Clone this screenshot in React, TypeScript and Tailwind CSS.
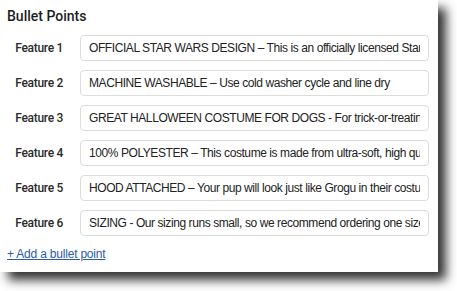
import React from 'react';

const features = [
  'OFFICIAL STAR WARS DESIGN – This is an officially licensed Star Wars costume for dogs',
  'MACHINE WASHABLE – Use cold washer cycle and line dry',
  'GREAT HALLOWEEN COSTUME FOR DOGS - For trick-or-treating and parties',
  '100% POLYESTER – This costume is made from ultra-soft, high quality fabric',
  'HOOD ATTACHED – Your pup will look just like Grogu in their costume',
  'SIZING - Our sizing runs small, so we recommend ordering one size up',
];

const App: React.FC = () => {
  return (
    <div
      className="w-[457px] h-[291px] bg-white overflow-hidden"
      style={{ fontFamily: '"Liberation Sans", Arial, sans-serif' }}
    >
      <div className="w-[438px] h-[272px] bg-white shadow-[8px_8px_10px_rgba(0,0,0,0.8)] pl-[7px] pr-[9px] pt-[6px]">
        <h2 className="font-['Roboto',sans-serif] text-[14px] leading-[20px] font-medium text-[#1d1d1f]">
          Bullet Points
        </h2>

        <div className="mt-[9px] flex flex-col gap-[9px]">
          {features.map((text, i) => (
            <div key={i} className="flex items-center gap-[17px]">
              <label className="w-[56px] shrink-0 text-right font-['Roboto',sans-serif] text-[12px] font-medium tracking-[-0.3px] text-[#2a2a2a]">
                Feature {i + 1}
              </label>
              <input
                readOnly
                value={text}
                className="w-[349px] h-[26px] rounded-[4px] border border-[#dcdcdc] bg-white px-[8px] text-[12px] tracking-[-0.42px] text-[#222] outline-none"
              />
            </div>
          ))}
        </div>

        <a href="#" className="mt-[9px] inline-block text-[12px] tracking-[-0.2px] text-[#2b5cab] underline">
          + Add a bullet point
        </a>
      </div>
    </div>
  );
};

export default App;
